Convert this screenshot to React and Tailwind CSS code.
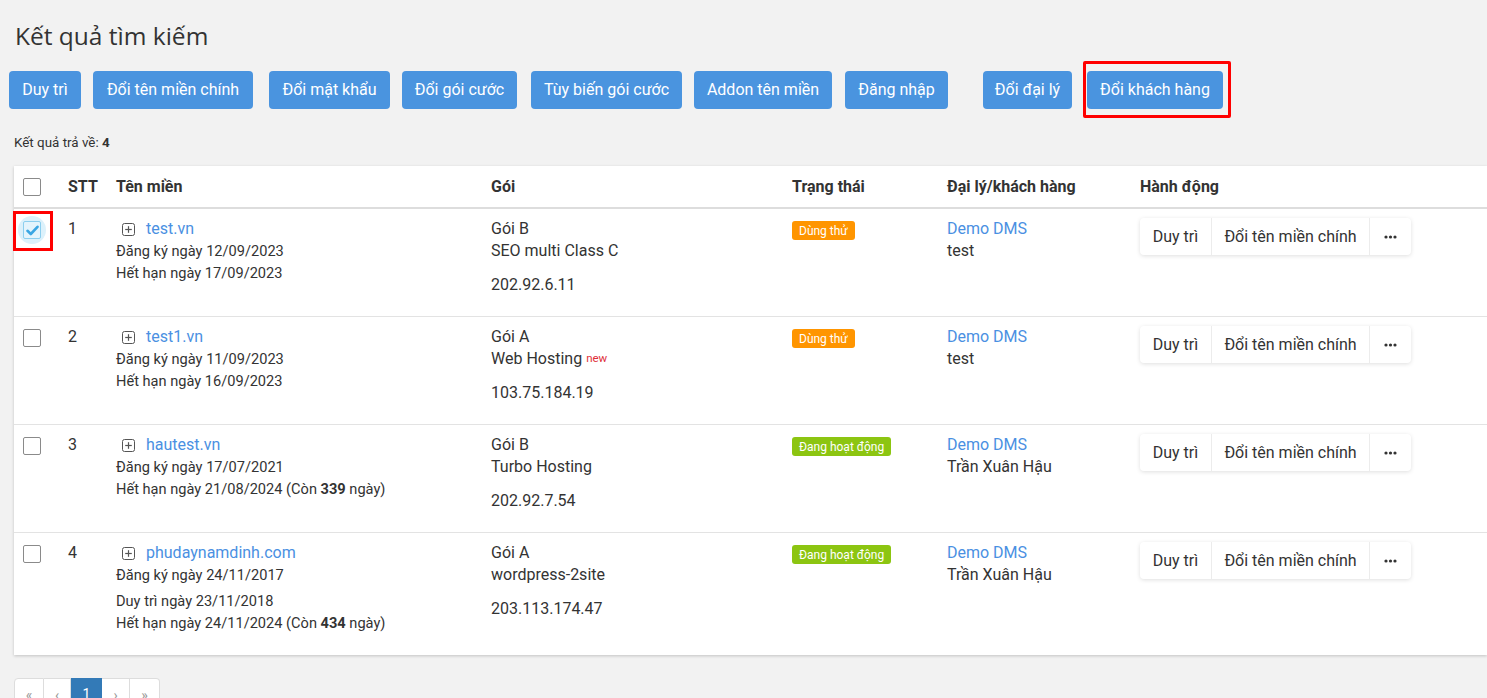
import React from "react";

const COLS = "grid grid-cols-[46px_48px_375px_301px_155px_193px_1fr]";

function PlusBox() {
  return (
    <svg width="13" height="13" viewBox="0 0 13 13" className="shrink-0">
      <rect x="0.5" y="0.5" width="12" height="12" rx="2" fill="none" stroke="#555" strokeWidth="1" />
      <line x1="3.2" y1="6.5" x2="9.8" y2="6.5" stroke="#555" strokeWidth="1.2" />
      <line x1="6.5" y1="3.2" x2="6.5" y2="9.8" stroke="#555" strokeWidth="1.2" />
    </svg>
  );
}

function Dots() {
  return (
    <svg width="13" height="4" viewBox="0 0 13 4">
      <circle cx="2" cy="2" r="1.6" fill="#333" />
      <circle cx="6.5" cy="2" r="1.6" fill="#333" />
      <circle cx="11" cy="2" r="1.6" fill="#333" />
    </svg>
  );
}

function Checkbox({ checked }) {
  if (checked) {
    return (
      <div className="relative w-[18px] h-[18px]">
        <div className="absolute left-[-5px] top-[-5px] w-[28px] h-[28px] rounded-full bg-[#dcf1fb]" />
        <div className="absolute inset-0 rounded-[2px] border border-[#8ccfef] bg-[#e4f4fc] flex items-center justify-center">
          <svg width="13" height="11" viewBox="0 0 13 11">
            <path d="M1.5 5.8 L4.8 9 L11.5 1.8" fill="none" stroke="#3aa6e3" strokeWidth="2.6" strokeLinecap="round" strokeLinejoin="round" />
          </svg>
        </div>
      </div>
    );
  }
  return <div className="w-[18px] h-[18px] rounded-[2px] border border-[#8a8a8a] bg-white" />;
}

function Badge({ type }) {
  if (type === "trial")
    return (
      <span className="inline-flex items-center h-[19px] px-[7px] rounded-[3px] bg-[#ff9500] text-white text-[12px] leading-none">
        Dùng thử
      </span>
    );
  return (
    <span className="inline-flex items-center h-[19px] px-[7px] rounded-[3px] bg-[#8cc511] text-white text-[12px] leading-none">
      Đang hoạt động
    </span>
  );
}

function Actions() {
  return (
    <div className="inline-flex h-[37px] rounded-[4px] bg-white shadow-[0_1px_4px_rgba(0,0,0,0.13)] text-[16px] text-[#333]">
      <div className="flex items-center justify-center w-[71px]">Duy trì</div>
      <div className="flex items-center justify-center w-[158px] border-l border-[#ececec] whitespace-nowrap">Đổi tên miền chính</div>
      <div className="flex items-center justify-center w-[42px] border-l border-[#ececec]">
        <Dots />
      </div>
    </div>
  );
}

const rows = [
  {
    stt: 1,
    domain: "test.vn",
    dates: ["Đăng ký ngày 12/09/2023", "Hết hạn ngày 17/09/2023"],
    goi: "Gói B",
    pkg: "SEO multi Class C",
    ip: "202.92.6.11",
    status: "trial",
    customer: "test",
    checked: true,
  },
  {
    stt: 2,
    domain: "test1.vn",
    dates: ["Đăng ký ngày 11/09/2023", "Hết hạn ngày 16/09/2023"],
    goi: "Gói A",
    pkg: "Web Hosting",
    isNew: true,
    ip: "103.75.184.19",
    status: "trial",
    customer: "test",
  },
  {
    stt: 3,
    domain: "hautest.vn",
    dates: ["Đăng ký ngày 17/07/2021"],
    expire: ["Hết hạn ngày 21/08/2024 (Còn ", "339", " ngày)"],
    goi: "Gói B",
    pkg: "Turbo Hosting",
    ip: "202.92.7.54",
    status: "active",
    customer: "Trần Xuân Hậu",
  },
  {
    stt: 4,
    domain: "phudaynamdinh.com",
    dates: ["Đăng ký ngày 24/11/2017"],
    renew: "Duy trì ngày 23/11/2018",
    expire: ["Hết hạn ngày 24/11/2024 (Còn ", "434", " ngày)"],
    goi: "Gói A",
    pkg: "wordpress-2site",
    ip: "203.113.174.47",
    status: "active",
    customer: "Trần Xuân Hậu",
  },
];

function Row({ r, last }) {
  return (
    <div className={`${COLS} pt-[9px] ${last ? "pb-[21px]" : "pb-[20px] border-b border-[#e3e3e3]"}`}>
      <div className="pl-[9px] pt-[3px]">
        <div className="relative">
          <Checkbox checked={r.checked} />
          {r.checked && (
            <div className="absolute left-[-10px] top-[-10px] w-[40px] h-[40px] border-[3px] border-[#ff0000]" />
          )}
        </div>
      </div>
      <div className="pl-[8px] text-[16px] leading-[22px] text-[#333]">{r.stt}</div>
      <div className="pl-[8px] text-[#333]">
        <div className="flex items-center h-[22px] pl-[6px] gap-[11px]">
          <PlusBox />
          <span className="text-[16px] text-[#4a90e2]">{r.domain}</span>
        </div>
        {r.dates.map((d) => (
          <div key={d} className="text-[14.6px] leading-[22px]">{d}</div>
        ))}
        {r.renew && <div className="text-[14.6px] leading-[22px] mt-[4px]">{r.renew}</div>}
        {r.expire && (
          <div className="text-[14.6px] leading-[22px]">
            {r.expire[0]}
            <b className="font-bold">{r.expire[1]}</b>
            {r.expire[2]}
          </div>
        )}
      </div>
      <div className="pl-[8px] text-[16px] leading-[22px] text-[#333]">
        <div>{r.goi}</div>
        <div>
          {r.pkg}
          {r.isNew && <sup className="text-[11.5px] text-[#e0303a] ml-[4px] relative top-[-2px]">new</sup>}
        </div>
        <div className="mt-[12px]">{r.ip}</div>
      </div>
      <div className="pl-[8px] pt-[3px] flex items-start">
        <Badge type={r.status} />
      </div>
      <div className="pl-[8px] text-[16px] leading-[22px] text-[#333]">
        <div className="text-[#4a90e2]">Demo DMS</div>
        <div>{r.customer}</div>
      </div>
      <div className="pl-[8px] flex items-start">
        <Actions />
      </div>
    </div>
  );
}

function Btn({ children, className = "" }) {
  return (
    <div className={`h-[38px] flex items-center justify-center rounded-[4px] bg-[#4a94df] text-white text-[16px] whitespace-nowrap ${className}`}>
      {children}
    </div>
  );
}

export default function App() {
  return (
    <div className="w-[1487px] h-[698px] overflow-hidden bg-[#f2f2f2] font-['Roboto',sans-serif] text-[#333]">
      <h1 className="pt-[22px] pl-[15px] text-[24.5px] leading-[28px] font-medium font-['Open_Sans',sans-serif] text-[#333]">
        Kết quả tìm kiếm
      </h1>
      <div className="flex mt-[21px] pl-[9px]">
        <Btn className="w-[72px]">Duy trì</Btn>
        <Btn className="ml-[12px] w-[160px]">Đổi tên miền chính</Btn>
        <Btn className="ml-[16px] w-[121px]">Đổi mật khẩu</Btn>
        <Btn className="ml-[12px] w-[115px]">Đổi gói cước</Btn>
        <Btn className="ml-[14px] w-[151px]">Tùy biến gói cước</Btn>
        <Btn className="ml-[12px] w-[138px]">Addon tên miền</Btn>
        <Btn className="ml-[13px] w-[103px]">Đăng nhập</Btn>
        <Btn className="ml-[35px] w-[89px]">Đổi đại lý</Btn>
        <div className="relative ml-[15px]">
          <Btn className="w-[136px]">Đổi khách hàng</Btn>
          <div className="absolute left-[-4px] right-[-8px] top-[-10px] bottom-[-9px] border-[3px] border-[#ff0000] rounded-[2px]" />
        </div>
      </div>
      <div className="mt-[25px] pl-[14px] text-[13.4px] leading-[18px] text-[#333]">
        Kết quả trả về: <b className="font-bold">4</b>
      </div>
      <div className="ml-[14px] mt-[14px] bg-white shadow-[0_1px_3px_rgba(0,0,0,0.2)]">
        <div className={`${COLS} h-[43px] items-center border-b-2 border-[#dddddd] text-[16px] font-bold text-[#333]`}>
          <div className="pl-[9px]">
            <Checkbox />
          </div>
          <div className="pl-[8px]">STT</div>
          <div className="pl-[8px]">Tên miền</div>
          <div className="pl-[8px]">Gói</div>
          <div className="pl-[8px]">Trạng thái</div>
          <div className="pl-[8px]">Đại lý/khách hàng</div>
          <div className="pl-[8px]">Hành động</div>
        </div>
        {rows.map((r, i) => (
          <Row key={r.stt} r={r} last={i === rows.length - 1} />
        ))}
      </div>
      <div className="flex ml-[14px] mt-[23px] text-[14px] leading-[20px]">
        <div className="h-[34px] w-[30px] flex justify-center pt-[6px] border border-[#ddd] bg-white rounded-l-[4px] text-[#999]">«</div>
        <div className="h-[34px] w-[27px] flex justify-center pt-[6px] border border-l-0 border-[#ddd] bg-white text-[#999]">‹</div>
        <div className="h-[34px] w-[31px] flex justify-center pt-[6px] bg-[#337ab7] text-white">1</div>
        <div className="h-[34px] w-[28px] flex justify-center pt-[6px] border border-l-0 border-[#ddd] bg-white text-[#999]">›</div>
        <div className="h-[34px] w-[30px] flex justify-center pt-[6px] border border-l-0 border-[#ddd] bg-white rounded-r-[4px] text-[#999]">»</div>
      </div>
    </div>
  );
}
